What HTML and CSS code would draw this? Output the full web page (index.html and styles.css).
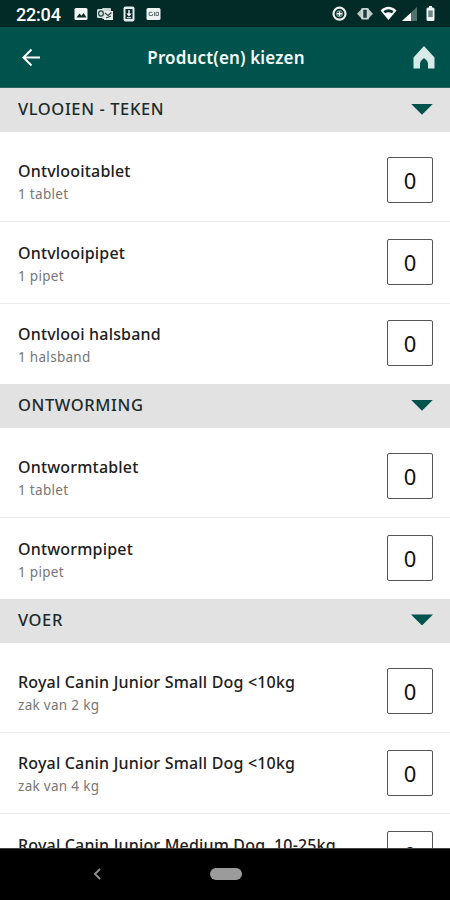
FILE: index.html
```html
<!DOCTYPE html>
<html lang="nl">
<head>
<meta charset="utf-8">
<meta name="viewport" content="width=device-width, initial-scale=1">
<title>Product(en) kiezen</title>
<link rel="stylesheet" href="styles.css">
</head>
<body>
<div class="screen">
  <div class="status">
    <span class="clock">22:04</span>
    <svg class="status-left" width="90" height="27" viewBox="72 0 90 27">
      <rect x="74.500" y="8" width="13" height="12" rx="1.500" fill="#f4f7f6"/>
      <path d="M76.500 17.500l3-4 2 2.300 2-2.800 3 4.500z" fill="#082c2a"/>
      <rect x="102" y="8" width="9" height="11" rx="1" fill="#cbd5d4"/>
      <path d="M104 11h9v9h-9z" fill="#e8eeed"/>
      <rect x="97" y="9" width="8" height="9" rx="1.500" fill="#dce4e3"/>
      <ellipse cx="101" cy="13.500" rx="2.300" ry="2.700" fill="none" stroke="#23413f" stroke-width="1.200"/>
      <path d="M105 13l3 2.500 3.500-3M106 18l5-2" fill="none" stroke="#23413f" stroke-width="1.100"/>
      <rect x="123.500" y="6.500" width="11" height="15" rx="2" fill="#e6eceb"/>
      <rect x="125.500" y="9" width="7" height="10" fill="#082c2a"/>
      <path d="M128.300 10h1.400v3.500h2L129 16.500l-2.700-3h2zM126.800 17.200h4.400v1h-4.400z" fill="#fff"/>
      <rect x="146.500" y="8" width="14" height="12" rx="1.500" fill="#eef2f1"/>
      <path d="M152.500 12.300h-3.300v3.200h3.300v-1.500M154.500 12v4M156 12.300h2.500v3.200H156z" fill="none" stroke="#637371" stroke-width="1"/>
    </svg>
    <svg class="status-right" width="110" height="27" viewBox="330 0 110 27">
      <circle cx="339.500" cy="13.700" r="6" fill="none" stroke="#edf2f1" stroke-width="2.200"/>
      <circle cx="339.500" cy="13.700" r="3" fill="none" stroke="#9db0ae" stroke-width="1"/>
      <path d="M337 13.700h5M339.500 11.200v5" fill="none" stroke="#edf2f1" stroke-width="1.500"/>
      <path d="M361 9.500v8.500l-4-4.200zM369 9.500v8.500l4-4.200z" fill="#b9c7c5"/>
      <rect x="361" y="8" width="8" height="11.500" rx="1.500" fill="#c9d4d3"/>
      <rect x="363.300" y="9.800" width="3.400" height="8" fill="#173b38"/>
      <path d="M380.500 10.500q8-7.500 16 0L388.500 20z" fill="#fff"/>
      <path d="M383.500 11q5-3.500 10 0l-1.500 2.200q-3.500-1.800-7 0z" fill="#082c2a"/>
      <path d="M417 7v14h-15z" fill="#527270"/>
      <path d="M411 12.700V21h-9z" fill="#fff"/>
      <path d="M428 7.500h1V6h3v1.500h1q1.500 0 1.500 1.500v10.500q0 1.500-1.500 1.500h-5q-1.500 0-1.500-1.500V9q0-1.500 1.500-1.500z" fill="#edf2f1"/>
      <rect x="428.300" y="10.500" width="4.400" height="6.500" fill="#6b8582"/>
    </svg>
  </div>
  <header class="bar">
    <svg class="back" width="20" height="20" viewBox="0 0 20 20"><path d="M19 10.500H2.500M10.500 2.500l-8 8 8 8" fill="none" stroke="#fff" stroke-width="2"/></svg>
    <h1>Product(en) kiezen</h1>
    <svg class="home" width="22" height="24" viewBox="0 0 22 24"><path d="M11 1L21.500 12.500v11H15v-5q-.5-3-4-5.500-3.500 2.500-4 5.500v5H.5v-11z" fill="#d7eae7"/></svg>
  </header>
  <main class="list">
    <h2 class="section">VLOOIEN - TEKEN<i></i></h2>
    <div class="group">
      <div class="row"><div class="name"><b>Ontvlooitablet</b><small>1 tablet</small></div><span class="qty">0</span></div>
      <div class="row"><div class="name"><b>Ontvlooipipet</b><small>1 pipet</small></div><span class="qty">0</span></div>
      <div class="row"><div class="name"><b>Ontvlooi halsband</b><small>1 halsband</small></div><span class="qty">0</span></div>
    </div>
    <h2 class="section">ONTWORMING<i></i></h2>
    <div class="group">
      <div class="row"><div class="name"><b>Ontwormtablet</b><small>1 tablet</small></div><span class="qty">0</span></div>
      <div class="row"><div class="name"><b>Ontwormpipet</b><small>1 pipet</small></div><span class="qty">0</span></div>
    </div>
    <h2 class="section">VOER<i></i></h2>
    <div class="group">
      <div class="row"><div class="name"><b>Royal Canin Junior Small Dog &lt;10kg</b><small>zak van 2 kg</small></div><span class="qty">0</span></div>
      <div class="row"><div class="name"><b>Royal Canin Junior Small Dog &lt;10kg</b><small>zak van 4 kg</small></div><span class="qty">0</span></div>
      <div class="row"><div class="name"><b>Royal Canin Junior Medium Dog&nbsp; 10-25kg</b></div><span class="qty">0</span></div>
    </div>
  </main>
  <nav class="nav">
    <svg width="10" height="14" viewBox="0 0 10 14"><path d="M8 2L3 7l5 5" fill="none" stroke="#8d8d8d" stroke-width="2"/></svg>
    <span class="pill"></span>
  </nav>
</div>
</body>
</html>
```
FILE: styles.css
```css
* { box-sizing: border-box; }
body { margin: 0; font-family: "Noto Sans", "Open Sans", sans-serif; background: #fff; }
.screen { display: flex; flex-direction: column; width: 450px; height: 900px; overflow: hidden; }
.status { flex: none; display: flex; height: 27px; background: #022b28; }
.clock { width: 56px; margin-left: 16px; font: 500 18px/30px Roboto, sans-serif; letter-spacing: -0.2px; color: #fff; }
.status-right { margin-left: 168px; }
.bar { flex: none; display: flex; align-items: center; height: 61px; padding: 0 15px 0 21px; background: #00524c; border-bottom: 1px solid #2c6561; }
.bar h1 { flex: 1; margin: 0; padding: 2px 2px 0 0; text-align: center; font-size: 17px; font-weight: 600; line-height: 24px; letter-spacing: 0.15px; color: #f4fbfa; }
.list { flex: 1; min-height: 0; overflow: hidden; }
.section { display: flex; align-items: center; justify-content: space-between; height: 44px; margin: 0; padding: 0 17px 2.4px 18px; background: #e2e2e2; font-size: 16.500px; font-weight: 500; line-height: 23px; letter-spacing: 0.6px; color: #1c2b2a; }
.section i { width: 22px; height: 11px; margin-top: 1px; background: #00524c; clip-path: polygon(0 0, 100% 0, 50% 100%); }
.group { padding-top: 8px; }
.row { display: flex; align-items: center; justify-content: space-between; height: 81.33px; padding: 0 17px 0.5px 18px; }
.row + .row { padding-bottom: 1.2px; border-top: 1px solid #ebebeb; }
.name { display: flex; flex-direction: column; height: 49px; padding-top: 4.2px; white-space: nowrap; }
.name b { font-size: 16px; font-weight: 500; line-height: 23px; letter-spacing: 0.18px; color: #202020; }
.name small { font-size: 13.500px; line-height: 22px; letter-spacing: 0.3px; color: #777; }
.qty { flex: none; width: 46px; height: 46px; border: 1px solid #555; border-radius: 2px; text-align: center; font-size: 22px; line-height: 44px; color: #111; }
.nav { flex: none; display: flex; align-items: center; height: 52px; padding: 0 0 1px 92px; background: #000; border-top: 1px solid #444; }
.pill { width: 32px; height: 12px; margin-left: 108px; border-radius: 6px; background: #9b9b9b; }
```
